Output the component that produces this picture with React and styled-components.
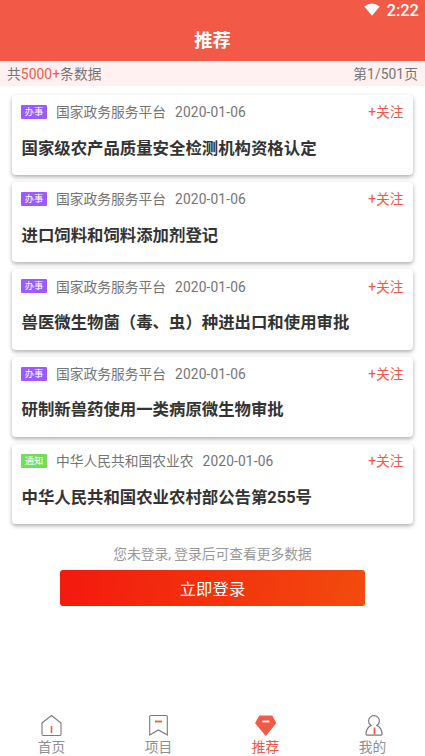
import React from "react";
import styled, { createGlobalStyle } from "styled-components";

const GlobalStyle = createGlobalStyle`
  * { box-sizing: border-box; }
  body { margin: 0; background: #fff; }
`;

const Screen = styled.div`
  width: 425px;
  height: 756px;
  display: flex;
  flex-direction: column;
  overflow: hidden;
  background: #fff;
  color: #757575;
  font-family: Roboto, "Noto Sans CJK SC", sans-serif;
  font-size: 13.75px;
  line-height: 20px;
  white-space: nowrap;
`;

const Header = styled.header`
  height: 61px;
  background: #f25a47;
  color: #fff;
`;

const StatusBar = styled.div`
  height: 21px;
  display: flex;
  justify-content: flex-end;
  align-items: center;
  gap: 7px;
  padding: 1px 6px 0 0;
  font-size: 16.5px;
  font-weight: 500;
  line-height: 20px;

  svg { display: block; margin-top: -3px; }
`;

const Title = styled.h1`
  margin: 0;
  height: 40px;
  line-height: 40px;
  font-size: 18.3px;
  font-weight: 700;
  text-align: center;
`;

const Summary = styled.div`
  height: 25px;
  display: flex;
  justify-content: space-between;
  align-items: center;
  padding: 1px 7px 0;
  background: #fff1f1;
  letter-spacing: 0.1px;
`;

const Accent = styled.span`
  color: #f25a47;
`;

const List = styled.main`
  flex: 1;
  padding: 9px 12px 0;
`;

const Card = styled.article`
  height: 80.2px;
  margin-bottom: 7px;
  padding: 6.8px 9.5px 0;
  border-radius: 4px;
  background: #fff;
  box-shadow: 0 2px 4px rgba(0, 0, 0, 0.32);
`;

const Meta = styled.div`
  display: flex;
  align-items: center;
  height: 21px;
`;

const Tag = styled.span`
  width: 26px;
  height: 14px;
  margin: -0.6px 9px 0 -0.5px;
  border-radius: 1px;
  background: ${(p) => p.$color};
  color: #fff;
  font-size: 9.2px;
  line-height: 14px;
  text-align: center;
`;

const DateText = styled.time`
  margin-left: 9px;
  letter-spacing: 0.15px;
`;

const Follow = styled.span`
  margin-left: auto;
  color: #f25a47;
`;

const Heading = styled.h2`
  margin: 13px 0 0;
  color: #333;
  font-size: 16.4px;
  line-height: 26px;
  font-weight: 700;
`;

const Prompt = styled.p`
  margin: 20px 0 0;
  color: #999;
  line-height: 20px;
  text-align: center;
`;

const LoginButton = styled.button`
  display: block;
  width: 305px;
  height: 36px;
  margin: 6px auto 0;
  padding: 3px 0 0;
  border: 0;
  border-radius: 3px;
  background: linear-gradient(100deg, #f3190e, #f24b0d);
  color: #fff;
  font-family: inherit;
  font-size: 16.4px;
  line-height: 33px;
`;

const TabBar = styled.nav`
  height: 46px;
  display: grid;
  grid-template-columns: repeat(4, 107px);
  margin-left: -2px;
`;

const Tab = styled.a`
  display: flex;
  flex-direction: column;
  align-items: center;
  color: ${(p) => (p.$active ? "#f25a47" : "#8f8f8f")};

  svg { display: block; margin: 4px 0 -1px; }
`;

const items = [
  ["办事", "国家政务服务平台", "国家级农产品质量安全检测机构资格认定"],
  ["办事", "国家政务服务平台", "进口饲料和饲料添加剂登记"],
  ["办事", "国家政务服务平台", "兽医微生物菌（毒、虫）种进出口和使用审批"],
  ["办事", "国家政务服务平台", "研制新兽药使用一类病原微生物审批"],
  ["通知", "中华人民共和国农业农", "中华人民共和国农业农村部公告第255号"],
];

const tagColors = { 办事: "#9c5bff", 通知: "#71df5c" };

const tabs = [
  {
    label: "首页",
    icon: (
      <>
        <path d="M2 9 11.500 1.500 21 9v11.300a1.200 1.200 0 0 1-1.200 1.200H3.200a1.200 1.200 0 0 1-1.200-1.200Z" fill="none" stroke="#7b7b7b" strokeWidth="1.1" />
        <path d="M11.500 12v7" stroke="#f25a47" strokeWidth="1.6" />
      </>
    ),
  },
  {
    label: "项目",
    icon: (
      <>
        <path d="M2.700 21V2.700a1.200 1.200 0 0 1 1.200-1.200h15.200a1.200 1.200 0 0 1 1.200 1.200V21l-8.800-5Z" fill="none" stroke="#7b7b7b" strokeWidth="1.1" />
        <path d="M8 7.500h7" stroke="#f25a47" strokeWidth="1.8" />
      </>
    ),
  },
  {
    label: "推荐",
    active: true,
    icon: (
      <>
        <path d="M5.500 2.200h12.500l3.600 6.800L11.800 21 1.800 9Z" fill="#f25a47" stroke="#f25a47" strokeWidth="1.2" strokeLinejoin="round" />
        <path d="M8.300 7.500h7" stroke="#fff" strokeWidth="1.8" />
      </>
    ),
  },
  {
    label: "我的",
    icon: (
      <>
        <path d="M10.200 11.400C8.300 10.300 7.600 8.700 7.600 7a5.400 5.400 0 0 1 10.800 0c0 1.700-.7 3.300-2.600 4.400 3 1.400 5 4.700 5.200 8.300.1 1.100-.5 1.500-1.300 1.500H6.300c-.8 0-1.400-.4-1.300-1.500.2-3.600 2.200-6.900 5.200-8.300Z" fill="none" stroke="#7b7b7b" strokeWidth="1.2" />
        <path d="M13.500 13.500v7" stroke="#f25a47" strokeWidth="1.8" />
      </>
    ),
  },
];

export default function App() {
  return (
    <Screen>
      <GlobalStyle />
      <Header>
        <StatusBar>
          <svg width="16" height="13" viewBox="0 0 16 13" fill="#fff">
            <path d="M.3 3.500Q8-2.500 15.700 3.500L8 12.700Z" />
          </svg>
          2:22
        </StatusBar>
        <Title>推荐</Title>
      </Header>
      <Summary>
        <span>共<Accent>5000+</Accent>条数据</span>
        <span>第1/501页</span>
      </Summary>
      <List>
        {items.map(([tag, source, title]) => (
          <Card key={title}>
            <Meta>
              <Tag $color={tagColors[tag]}>{tag}</Tag>
              <span>{source}</span>
              <DateText>2020-01-06</DateText>
              <Follow>+关注</Follow>
            </Meta>
            <Heading>{title}</Heading>
          </Card>
        ))}
        <Prompt>您未登录, 登录后可查看更多数据</Prompt>
        <LoginButton>立即登录</LoginButton>
      </List>
      <TabBar>
        {tabs.map(({ label, icon, active }) => (
          <Tab key={label} $active={active}>
            <svg width="24" height="24" viewBox="0 0 24 24">{icon}</svg>
            {label}
          </Tab>
        ))}
      </TabBar>
    </Screen>
  );
}
